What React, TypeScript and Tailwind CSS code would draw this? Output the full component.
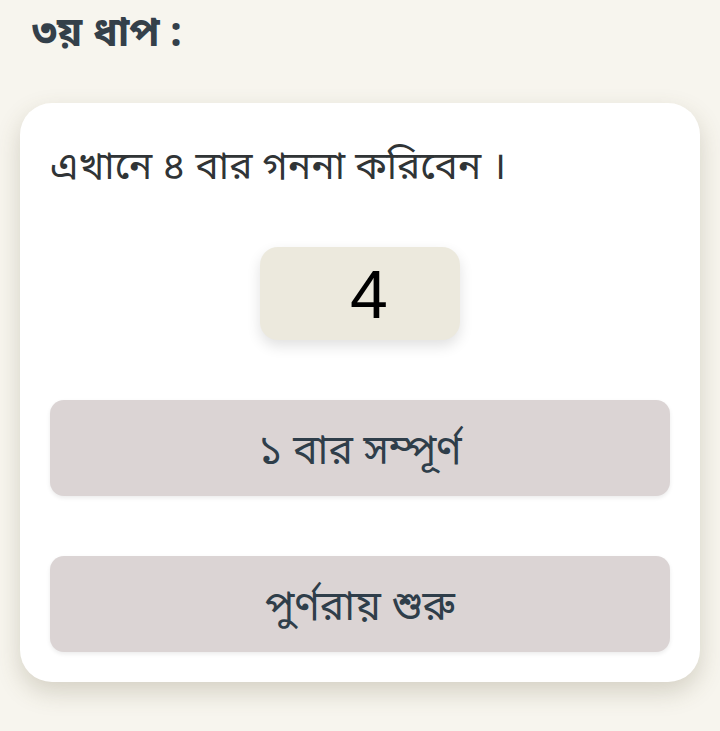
export default function App() {
  return (
    <div className="min-h-[731px] w-[720px] bg-[#f7f5ee] px-5 pt-[12px] font-['Noto_Sans','Noto_Sans_Bengali',sans-serif]">
      <h1 className="pl-3 text-[41px] font-bold leading-[36px] text-[#34404a]">৩য় ধাপ :</h1>
      <div className="mt-[55px] rounded-[32px] bg-white px-[30px] pb-[30px] pt-[38px] shadow-[0_10px_24px_rgba(90,80,50,0.22)]">
        <p className="text-[39px] leading-[46px] text-[#303436]">এখানে ৪ বার গননা করিবেন ।</p>
        <div className="mt-[60px] flex justify-center">
          <div className="flex h-[93px] w-[200px] items-center justify-center rounded-[18px] bg-[#ece9dd] pl-[18px] font-['Liberation_Sans',sans-serif] text-[68px] leading-none text-black shadow-[0_6px_14px_rgba(0,0,0,0.12)]">
            4
          </div>
        </div>
        <button className="mt-[60px] flex h-[96px] w-full items-center justify-center rounded-[14px] bg-[#dbd4d4] text-[41px] leading-[46px] text-[#2f3e4a] shadow-[0_2px_4px_rgba(0,0,0,0.08)]">
          ১ বার সম্পূর্ণ
        </button>
        <button className="mt-[60px] flex h-[96px] w-full items-center justify-center rounded-[14px] bg-[#dbd4d4] text-[41px] leading-[46px] text-[#2f3e4a] shadow-[0_2px_4px_rgba(0,0,0,0.08)]">
          পুর্ণরায় শুরু
        </button>
      </div>
    </div>
  );
}
